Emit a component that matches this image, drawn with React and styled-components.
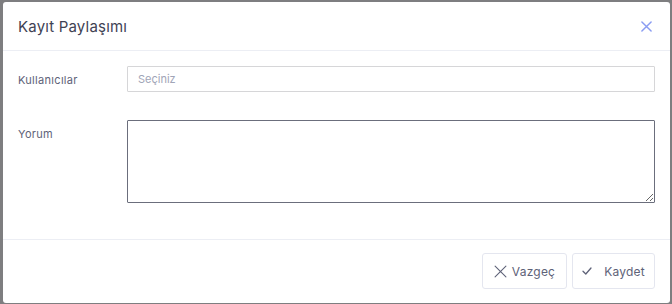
import React from "react";
import styled, { createGlobalStyle } from "styled-components";

const GlobalStyle = createGlobalStyle`
  html, body {
    margin: 0;
    padding: 0;
    background: #7e7e80;
    font-family: Inter, "Noto Sans", "Liberation Sans", sans-serif;
  }
  #root {
    width: 672px;
    height: 304px;
    overflow: hidden;
  }
`;

const Backdrop = styled.div`
  width: 672px;
  height: 304px;
  box-sizing: border-box;
  padding: 2px 2px 1px 3px;
  display: flex;
`;

const Modal = styled.div`
  flex: 1;
  background: #ffffff;
  border-radius: 3px;
  display: flex;
  flex-direction: column;
`;

const Header = styled.div`
  height: 48px;
  padding: 0 18px 0 15px;
  display: flex;
  align-items: center;
  justify-content: space-between;
  border-bottom: 1px solid #eceef4;
`;

const Title = styled.h5`
  margin: 0;
  font-size: 15px;
  font-weight: 400;
  color: #3f4254;
  letter-spacing: 0.2px;
`;

const CloseButton = styled.button`
  border: 0;
  background: none;
  padding: 0;
  display: flex;
  cursor: pointer;
`;

const Body = styled.div`
  flex: 1;
  padding: 15px 15px 0;
  display: flex;
  flex-direction: column;
  gap: 28px;
`;

const Row = styled.div`
  display: grid;
  grid-template-columns: 109px 1fr;
  align-items: start;
`;

const Label = styled.label`
  padding-top: 8px;
  font-size: 11px;
  line-height: 13px;
  letter-spacing: 0.3px;
  color: #5e6278;
`;

const Select = styled.div`
  height: 26px;
  box-sizing: border-box;
  border: 1px solid #d6d6d8;
  border-radius: 1px;
  padding: 0 10px;
  display: flex;
  align-items: center;
  font-size: 11px;
  color: #a1a5b7;
`;

const TextArea = styled.textarea`
  height: 83px;
  box-sizing: border-box;
  border: 1px solid #6b6e7c;
  border-radius: 1px;
  margin: 0;
  padding: 6px 10px;
  font: inherit;
  font-size: 11px;
  outline: none;
  resize: vertical;
`;

const Footer = styled.div`
  height: 64px;
  box-sizing: border-box;
  border-top: 1px solid #eceef4;
  padding: 13px 15px 0;
  display: flex;
  justify-content: flex-end;
  align-items: flex-start;
  gap: 5px;
`;

const Button = styled.button`
  width: ${({ $w }) => $w}px;
  height: 36px;
  border: 1px solid #e4e6ef;
  border-radius: 3px;
  background: #ffffff;
  display: flex;
  align-items: center;
  justify-content: center;
  gap: ${({ $gap }) => $gap}px;
  font-family: inherit;
  font-size: 12px;
  letter-spacing: 0.2px;
  color: #5e6278;
  cursor: pointer;
  padding: 0;
`;

const XIcon = ({ size, color, width }) => (
  <svg width={size} height={size} viewBox="0 0 12 12" fill="none">
    <path d="M1 1L11 11M11 1L1 11" stroke={color} strokeWidth={width} strokeLinecap="round" />
  </svg>
);

const CheckIcon = () => (
  <svg width="10" height="10" viewBox="0 0 10 10" fill="none">
    <path d="M1 5.2L3.8 8L9 2" stroke="#5e6278" strokeWidth="1.3" strokeLinecap="round" strokeLinejoin="round" />
  </svg>
);

export default function App() {
  return (
    <>
      <GlobalStyle />
      <Backdrop>
        <Modal>
          <Header>
            <Title>Kayıt Paylaşımı</Title>
            <CloseButton aria-label="Kapat">
              <XIcon size={11} color="#8a9cf2" width={1.6} />
            </CloseButton>
          </Header>
          <Body>
            <Row>
              <Label>Kullanıcılar</Label>
              <Select>Seçiniz</Select>
            </Row>
            <Row>
              <Label>Yorum</Label>
              <TextArea />
            </Row>
          </Body>
          <Footer>
            <Button $w={85} $gap={5}>
              <XIcon size={13} color="#5e6278" width={1} />
              Vazgeç
            </Button>
            <Button $w={83} $gap={12}>
              <CheckIcon />
              Kaydet
            </Button>
          </Footer>
        </Modal>
      </Backdrop>
    </>
  );
}
